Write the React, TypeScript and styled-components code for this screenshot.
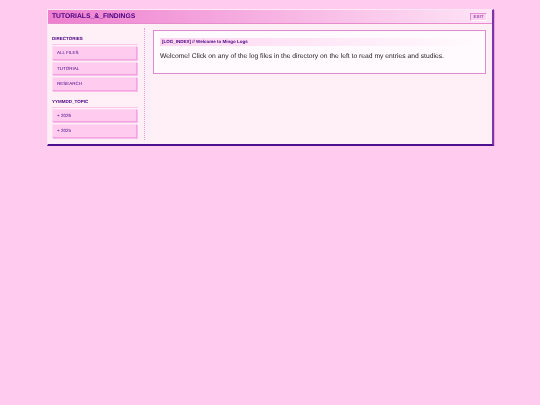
import React from "react";
import styled, { createGlobalStyle } from "styled-components";

const Global = createGlobalStyle`
  html, body { margin: 0; padding: 0; background: #ffccf0; font-family: "Liberation Sans", Arial, sans-serif; text-rendering: geometricPrecision; }
  #root { padding-top: 9px; }
`;

const Window = styled.div`
  box-sizing: border-box;
  width: 447px;
  margin-left: 47px;
  background: #fff0f8;
  border-top: 1px solid #ffe8f6;
  border-left: 1px solid #ffe8f6;
  border-right: 2px solid #7a35a8;
  border-bottom: 2px solid #4b0f90;
  box-shadow: 1px 1px 0 #f0a0dc;
  color: #4b0082;
  filter: blur(0.4px);
`;

const TitleBar = styled.header`
  display: flex;
  align-items: center;
  justify-content: space-between;
  height: 13px;
  padding: 0 5px 0 4px;
  background: linear-gradient(to right, #ee80cf, #ffe4f6);
  border-bottom: 1px solid #e88cd0;
`;

const Title = styled.h1`
  margin: 0;
  font-size: 6.75px;
  font-weight: 700;
  line-height: 13px;
  color: #4b0082;
`;

const ExitButton = styled.button`
  box-sizing: border-box;
  width: 17px;
  height: 8px;
  margin: 0;
  padding: 0;
  background: #ffd0f0;
  border-style: solid;
  border-width: 1px;
  border-color: #e48cd2 #fff6fc #fff6fc #e48cd2;
  color: #4b0082;
  font: 4.5px/6px "Liberation Sans", Arial, sans-serif;
  text-rendering: geometricPrecision;
`;

const Body = styled.div`
  display: flex;
  height: 120px;
`;

const Sidebar = styled.nav`
  box-sizing: border-box;
  width: 97px;
  height: 112px;
  margin-top: 4px;
  padding: 7px 5px 0 4px;
  border-right: 1px dotted #ec9cd8;
`;

const SectionTitle = styled.h2`
  margin: 0 1px 1px 0;
  padding: 0 0 1px;
  font-size: 4.5px;
  line-height: 8px;
  font-weight: 700;
  color: #4b0082;
  border-bottom: 1px solid #fbc8ec;
  &:not(:first-child) { margin-top: 7px; }
`;

const NavButton = styled.a`
  display: block;
  box-sizing: border-box;
  width: 85px;
  height: 13.5px;
  margin-bottom: 2px;
  padding-left: 4px;
  background: #ffccf0;
  border: 1px solid;
  border-color: #ffdcf4 #f4a4e0 #f4a4e0 #ffdcf4;
  box-shadow: 1px 1px 0 #f8bce8;
  font-size: 4.5px;
  line-height: 11.5px;
  color: #4b0082;
`;

const Main = styled.main`
  flex: 1;
  padding: 6px 6px 0 8px;
`;

const Panel = styled.section`
  box-sizing: border-box;
  height: 44px;
  padding: 7px 6px;
  background: #fffafd;
  border: 1px solid #e08ad0;
`;

const Crumb = styled.div`
  height: 8px;
  padding-left: 2px;
  background: linear-gradient(to right, #ffd6f2, #fffafd);
  font-size: 4.5px;
  line-height: 8px;
  font-weight: 700;
  color: #4b0082;
`;

const Message = styled.p`
  margin: 4px 0 0;
  font-size: 6.75px;
  line-height: 14px;
  color: #222;
`;

export default function App() {
  return (
    <>
      <Global />
      <Window>
        <TitleBar>
          <Title>TUTORIALS_&amp;_FINDINGS</Title>
          <ExitButton>EXIT</ExitButton>
        </TitleBar>
        <Body>
          <Sidebar>
            <SectionTitle>DIRECTORIES</SectionTitle>
            <NavButton>ALL FILES</NavButton>
            <NavButton>TUTORIAL</NavButton>
            <NavButton>RESEARCH</NavButton>
            <SectionTitle>YYMMDD_TOPIC</SectionTitle>
            <NavButton>+ 2026</NavButton>
            <NavButton>+ 2025</NavButton>
          </Sidebar>
          <Main>
            <Panel>
              <Crumb>[LOG_INDEX] // Welcome to Mingo Logs</Crumb>
              <Message>Welcome! Click on any of the log files in the directory on the left to read my entries and studies.</Message>
            </Panel>
          </Main>
        </Body>
      </Window>
    </>
  );
}
